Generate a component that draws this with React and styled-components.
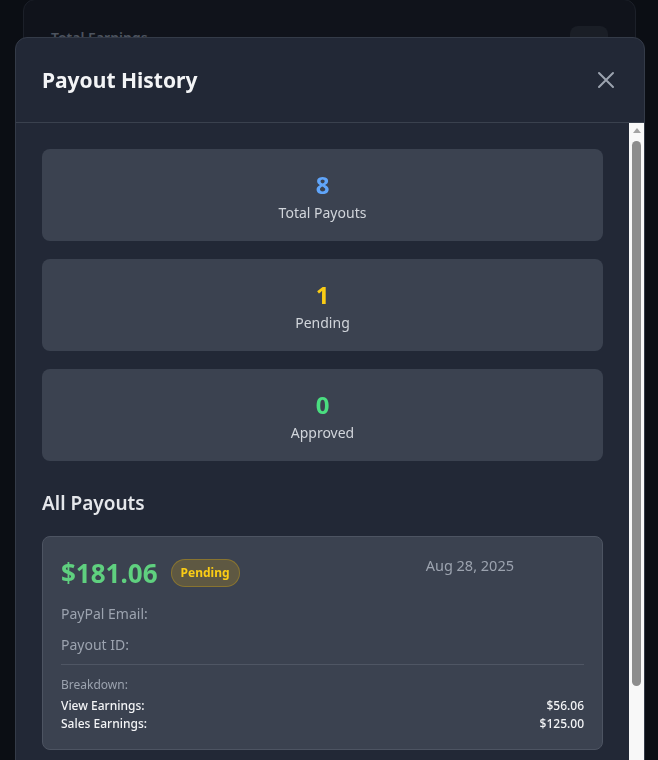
import React from "react";
import styled, { createGlobalStyle } from "styled-components";

const GlobalStyle = createGlobalStyle`
  html, body {
    margin: 0;
    height: 100%;
    overflow: hidden;
    background: #0b0e14;
    font-family: "Noto Sans", "Open Sans", sans-serif;
  }
  * { box-sizing: border-box; }
`;

const Page = styled.div`
  padding: 0 22px 0 23px;
  margin-top: -1px;
`;

const BackCard = styled.div`
  background: #10131b;
  border: 1px solid #1c2029;
  border-radius: 12px;
  height: 200px;
  padding: 26px 27px;
  display: flex;
  justify-content: space-between;
  align-items: flex-start;
`;

const BackLabel = styled.div`
  color: #4d535f;
  font-size: 14px;
  font-weight: 600;
  margin-top: 2px;
`;

const BackIcon = styled.div`
  width: 38px;
  height: 38px;
  border-radius: 8px;
  background: #1a1e26;
`;

const Modal = styled.div`
  position: fixed;
  top: 37px;
  left: 15px;
  width: 630px;
  background: #222836;
  border: 1px solid #343b48;
  border-radius: 12px;
  display: flex;
  flex-direction: column;
  overflow: hidden;
`;

const Header = styled.div`
  height: 85px;
  padding: 0 26px;
  display: flex;
  align-items: center;
  justify-content: space-between;
  border-bottom: 1px solid #3a414e;
`;

const Title = styled.h2`
  margin: 0;
  color: #f3f4f6;
  font-size: 21px;
  font-weight: 700;
`;

const CloseButton = styled.button`
  background: none;
  border: none;
  padding: 0;
  color: #9ca3af;
  display: flex;
  cursor: pointer;
`;

const Body = styled.div`
  height: 700px;
  display: flex;
`;

const Content = styled.div`
  flex: 1;
  overflow: hidden;
  padding: 26px 26px;
  display: flex;
  flex-direction: column;
`;

const ScrollTrack = styled.div`
  width: 15px;
  background: #f8f8f8;
  display: flex;
  flex-direction: column;
  align-items: center;
  padding-top: 5px;
`;

const ScrollArrow = styled.div`
  width: 0;
  height: 0;
  border-left: 4px solid transparent;
  border-right: 4px solid transparent;
  border-bottom: 5px solid #a3a3a3;
`;

const ScrollThumb = styled.div`
  margin-top: 8px;
  width: 9px;
  height: 545px;
  border-radius: 5px;
  background: #8d8d8d;
`;

const Stat = styled.div`
  flex-shrink: 0;
  height: 92px;
  margin-bottom: 18px;
  background: #3b4250;
  border-radius: 8px;
  display: flex;
  flex-direction: column;
  align-items: center;
  padding-top: 21px;
`;

const StatValue = styled.div`
  font-size: 24px;
  font-weight: 700;
  line-height: 30px;
  color: ${p => p.$color};
`;

const StatLabel = styled.div`
  font-size: 14px;
  color: #d1d5db;
  line-height: 24px;
  margin-top: 1px;
`;

const SectionTitle = styled.h3`
  margin: 11px 0 20px;
  font-size: 19px;
  font-weight: 600;
  color: #e5e7eb;
`;

const Payout = styled.div`
  flex-shrink: 0;
  background: #3b4250;
  border: 1px solid #4d5462;
  border-radius: 8px;
  padding: 18px 18px 16px;
`;

const TopRow = styled.div`
  display: flex;
  justify-content: space-between;
  align-items: flex-start;
`;

const AmountWrap = styled.div`
  display: flex;
  align-items: center;
  gap: 13px;
`;

const Amount = styled.div`
  font-size: 26px;
  font-weight: 700;
  color: #5fd07f;
  line-height: 36px;
`;

const Badge = styled.span`
  font-size: 12px;
  font-weight: 700;
  color: #facc15;
  background: rgba(234, 179, 8, 0.2);
  border: 1px solid rgba(234, 179, 8, 0.3);
  border-radius: 999px;
  padding: 5px 9px;
  line-height: 16px;
`;

const DateText = styled.div`
  font-size: 14.5px;
  color: #9ca3af;
  margin-right: 70px;
  line-height: 20px;
`;

const Field = styled.div`
  font-size: 14px;
  color: #9ca3af;
  line-height: 20px;
  margin-top: ${p => p.$top}px;
`;

const Divider = styled.div`
  height: 1px;
  background: #4f5664;
  margin: 9px 0 11px;
`;

const Small = styled.div`
  font-size: 12px;
  color: #9ca3af;
  line-height: 18px;
  margin-bottom: 3px;
`;

const BreakRow = styled.div`
  display: flex;
  justify-content: space-between;
  font-size: 12px;
  font-weight: 500;
  color: #f3f4f6;
  line-height: 18px;
`;

const stats = [
  { value: "8", label: "Total Payouts", color: "#60a5fa" },
  { value: "1", label: "Pending", color: "#facc15" },
  { value: "0", label: "Approved", color: "#4ade80" },
];

const payouts = [
  { amount: "$181.06", date: "Aug 28, 2025", views: "$56.06", sales: "$125.00" },
];

export default function App() {
  return (
    <>
      <GlobalStyle />
      <Page>
        <BackCard>
          <BackLabel>Total Earnings</BackLabel>
          <BackIcon />
        </BackCard>
      </Page>
      <Modal>
        <Header>
          <Title>Payout History</Title>
          <CloseButton aria-label="Close">
            <svg width="24" height="24" viewBox="0 0 24 24" fill="none" stroke="currentColor" strokeWidth="2" strokeLinecap="round">
              <path d="M5 5l14 14M19 5L5 19" />
            </svg>
          </CloseButton>
        </Header>
        <Body>
          <Content>
            {stats.map(s => (
              <Stat key={s.label}>
                <StatValue $color={s.color}>{s.value}</StatValue>
                <StatLabel>{s.label}</StatLabel>
              </Stat>
            ))}
            <SectionTitle>All Payouts</SectionTitle>
            {payouts.map(p => (
              <Payout key={p.date}>
                <TopRow>
                  <AmountWrap>
                    <Amount>{p.amount}</Amount>
                    <Badge>Pending</Badge>
                  </AmountWrap>
                  <DateText>{p.date}</DateText>
                </TopRow>
                <Field $top={13}>PayPal Email:</Field>
                <Field $top={11}>Payout ID:</Field>
                <Divider />
                <Small>Breakdown:</Small>
                <BreakRow><span>View Earnings:</span><span>{p.views}</span></BreakRow>
                <BreakRow><span>Sales Earnings:</span><span>{p.sales}</span></BreakRow>
              </Payout>
            ))}
          </Content>
          <ScrollTrack>
            <ScrollArrow />
            <ScrollThumb />
          </ScrollTrack>
        </Body>
      </Modal>
    </>
  );
}
